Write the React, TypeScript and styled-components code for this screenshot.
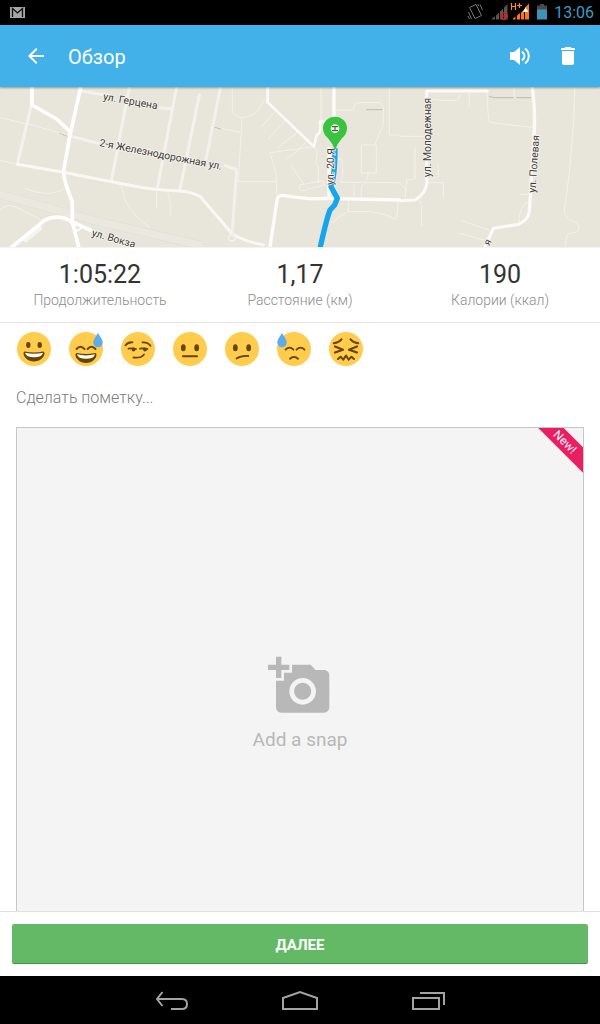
import React from 'react';
import styled, { createGlobalStyle } from 'styled-components';
import { MdAddAPhoto, MdArrowBack, MdDelete } from 'react-icons/md';

const GlobalStyle = createGlobalStyle`
  *, *::before, *::after { box-sizing: border-box; }
  body { margin: 0; background: #fff; font-family: Roboto, "Noto Sans", sans-serif; }
  button, input { font-family: inherit; }
`;

const Screen = styled.div`
  display: flex;
  flex-direction: column;
  height: 100vh;
  background: #fff;
  color: #333;
`;

const StatusBar = styled.div`
  flex: none;
  display: flex;
  align-items: center;
  gap: 6px;
  height: 25px;
  padding: 0 6px 0 10px;
  background: #000;
  color: #3a9cc8;
  font-size: 16px;
  line-height: 24px;
`;

const Spacer = styled.span`
  flex: 1;
`;

const AppBar = styled.header`
  position: relative;
  flex: none;
  display: flex;
  align-items: center;
  height: 62px;
  padding: 0 8px 0 12px;
  background: #42b1e9;
  color: #fff;
  box-shadow: 0 1px 2px rgba(0, 0, 0, 0.35);
`;

const Title = styled.h1`
  flex: 1;
  margin: 0;
  padding: 2px 0 0 8px;
  font-size: 20px;
  line-height: 24px;
  font-weight: 400;
`;

const IconButton = styled.button`
  display: flex;
  align-items: center;
  justify-content: center;
  width: 48px;
  height: 48px;
  padding: 0;
  border: 0;
  background: none;
  color: #fff;
`;

const MapView = styled.div`
  flex: none;
  height: 160px;
  background: #e8e5db;

  svg { display: block; width: 100%; height: 100%; }
  text { font-weight: 400; font-size: 31px; fill: #3f3c38; stroke: #f5f3ee; stroke-width: 5px; paint-order: stroke; }
`;

const Content = styled.main`
  flex: 1;
  min-height: 0;
  display: flex;
  flex-direction: column;
  overflow-y: auto;
  scrollbar-width: none;
`;

const Stats = styled.dl`
  flex: none;
  display: grid;
  grid-template-columns: repeat(3, 1fr);
  margin: 0;
  padding: 11px 0 13px;
  border-top: 1px solid #f4f3f0;
  border-bottom: 1px solid #e4e4e4;
`;

const Stat = styled.div`
  display: flex;
  flex-direction: column-reverse;
  text-align: center;
`;

const StatLabel = styled.dt`
  font-size: 14px;
  line-height: 18px;
  font-weight: 300;
  color: #8c8c8c;
`;

const StatValue = styled.dd`
  margin: 0;
  font-size: 25px;
  line-height: 32px;
  color: #333;
`;

const Moods = styled.div`
  flex: none;
  display: flex;
  gap: 16px;
  padding: 8px 16px;
`;

const MoodButton = styled.button`
  width: 36px;
  height: 36px;
  padding: 0;
  border: 0;
  background: none;

  svg { display: block; width: 36px; height: 36px; }
`;

const NoteInput = styled.input`
  flex: none;
  height: 44px;
  margin: 0 16px 8px;
  padding: 0;
  border: 0;
  outline: 0;
  background: none;
  font-size: 16px;
  font-weight: 300;
  color: #333;

  &::placeholder { color: #7c7c7c; opacity: 1; }
`;

const SnapButton = styled.button`
  position: relative;
  flex: none;
  display: flex;
  flex-direction: column;
  align-items: center;
  justify-content: center;
  gap: 10px;
  aspect-ratio: 1;
  margin: 0 16px 16px;
  padding: 0 0 16px;
  border: 1px solid #c6c6c6;
  background: #f4f4f4;
  color: #b8b8b8;
  font-size: 19px;
  line-height: 24px;
  overflow: hidden;
`;

const Ribbon = styled.span`
  position: absolute;
  top: 5px;
  right: -27px;
  width: 90px;
  background: #e91e63;
  color: #fff;
  font-size: 12px;
  line-height: 18px;
  text-align: center;
  transform: rotate(45deg);
`;

const Footer = styled.footer`
  flex: none;
  padding: 12px;
  border-top: 1px solid #e0e0e0;
  background: #fff;
`;

const NextButton = styled.button`
  display: block;
  width: 100%;
  height: 40px;
  padding: 2px 0 0;
  border: 0;
  border-bottom: 1px solid #4a9150;
  border-radius: 2px;
  background: #63b966;
  color: #fff;
  font-size: 15px;
  font-weight: 700;
`;

const SystemNav = styled.nav`
  flex: none;
  display: flex;
  justify-content: center;
  height: 48px;
  background: #000;
`;

const NavButton = styled.button`
  display: flex;
  align-items: center;
  justify-content: center;
  width: 128px;
  padding: 0;
  border: 0;
  background: none;
  color: #a3a3a3;
`;

const GmailIcon = () => (
  <svg width="15" height="11" viewBox="0 0 15 11" aria-hidden="true">
    <rect width="15" height="11" fill="#a5a5a5" />
    <path d="M2.5 10V1.5L7.5 6l5-4.5V10" fill="none" stroke="#111" strokeWidth="1.3" />
  </svg>
);

const StatusIcons = () => (
  <svg width="82" height="25" viewBox="466 0 82 25" aria-hidden="true">
    <g fill="none" stroke="#777" strokeWidth="1">
      <path d="M469.500 7.500l6.500-3 5.500 11-6.500 3z" />
      <path d="M468.500 12l3 7M480 4.500l2.500 5.500M468 16l1.500 3M477.500 4l1.500 2" />
    </g>
    <path d="M492 19.500v-1l3-2v3zM496 19.500v-4l3-3v7zM500 19.500v-8l3-3v11zM504 19.500V7.500l3.500-3.500v15.500z" fill="#555" />
    <circle cx="504" cy="16" r="3.200" fill="none" stroke="#c4272f" strokeWidth="1.500" />
    <path d="M501.500 16h5" stroke="#c4272f" strokeWidth="1.500" />
    <path d="M513 19.500v-1l2.500-2v3zM517 19.500v-4l3-2.500v6.500zM521 19.500v-7l3-2v9zM525 19.500V7.500l4-4v16z" fill="#ff7417" />
    <path d="M511.500 3v7M515.500 3v7M511.500 6.500h4M517 5.500h5M519.500 3v5" stroke="#ff8a2a" strokeWidth="1.200" />
    <path d="M522.500 12l3-4.500 3 4.500z" fill="#fff" />
    <path d="M540 4h4v1.500h3v5h-10v-5h3z" fill="#4a4a4a" />
    <path d="M537 9.500h10v10h-10z" fill="#3b93b5" />
  </svg>
);

const VolumeIcon = () => (
  <svg width="24" height="24" viewBox="0 0 24 24" aria-hidden="true">
    <path d="M2 8h4l6-5v18l-6-5H2z" fill="currentColor" />
    <path d="M14 7.500q5 4.500 0 9M17 4.600c5 3.600 5 11.200 0 14.800" fill="none" stroke="currentColor" strokeWidth="1.900" />
  </svg>
);

/* Street map; each group covers one third of the map's width. */
const StreetMap = () => (
  <svg viewBox="0 6 1800 480" preserveAspectRatio="xMidYMid slice" role="img" aria-label="Маршрут на карте">
    <g fill="none" stroke="#f4f2ec" strokeLinejoin="round" strokeLinecap="round">
      <path d="M0 328L280 406 600 480" stroke="#e2dfd5" strokeWidth="26" />
      <path d="M0 328L280 406 600 480" stroke="#ebe8e0" strokeWidth="22" />
      <g stroke="#f3f1eb" strokeWidth="3">
        <path d="M0 98L95 120 205 151M0 226l52 12M75 310c50 20 90 20 118 0M365 300c5 50 30 90 85 128M470 318v50M503 320q8 20 10 70M0 375q20-20 45-10l80 40" />
      </g>
      <g strokeWidth="9">
        <path d="M95 55L52 238M388 6L334 288M530 6L472 308M598 30L540 314M205 151l90 24M242 18l90 14M480 68l38 4" />
        <path d="M52 238L190 262 385 300Q455 315 540 318Q570 320 600 334L695 445Q720 465 790 480" stroke="#f9f8f5" />
      </g>
      <g stroke="#fff">
        <path d="M96 6V60L170 102 210 140" strokeWidth="11" />
        <path d="M242 6Q215 130 210 150L190 262Q195 300 217 350V410L236 486" strokeWidth="11" />
        <path d="M36 486L135 405Q175 385 220 412L290 444" strokeWidth="11" />
        <path d="M210 410l20 28 20-12" strokeWidth="5" />
        <path d="M76 464L118 430" strokeWidth="16" opacity="0.6" />
      </g>
    </g>
    <g transform="translate(600 0)" fill="none" stroke="#f3f1eb" strokeLinejoin="round" strokeLinecap="round">
      <path d="M97 6V80Q110 98 126 98Q155 95 170 80L195 42M126 98L115 290M45 126l75 16M227 78L184 126M262 102L205 162M294 140l-60 48M326 160q-30 40-66 60M342 185l-132 18 18 60 2 66M115 290h112M363 6V110M342 185l10 15-5 35 8 10v48M272 240l38 55M300 300l60-12q14-3 12 12l-66 18q-14-2-6-18M405 75h55q0-20 18-22h60q14 4 12 24v40L525 178M485 180h44v84h-44zM568 6V150h32M405 222h20q8 50-2 70h62q20-2 20-30M462 296v36M484 335v-30l10-12h106M388 410q20 5 22-10l34-20h70q20 4 40 8l30 14q10 0 10-60M445 345v35" strokeWidth="3" />
      <path d="M62 6L18 222M75 242l35 12L96 450" strokeWidth="9" />
      <path d="M203 6V52L342 185 350 150Q365 145 360 110H375" stroke="#fbfaf7" strokeWidth="8" />
      <path d="M402 6V130M210 486L232 340Q235 330 250 331Q330 345 375 340L600 345M387 190V340" stroke="#fdfcfa" strokeWidth="10" />
      <circle cx="96" cy="458" r="10" strokeWidth="4" />
      <path d="M500 74h46M45 127l18 5" stroke="#aaa79d" strokeWidth="2" />
      <path d="M405 190Q405 270 393 305L412 340 404 360 390 375Q380 400 360 490" stroke="#15a5ec" strokeWidth="16" strokeLinecap="butt" />
    </g>
    <g transform="translate(1200 0)" fill="none" stroke="#f3f1eb" strokeLinejoin="round" strokeLinecap="round">
      <path d="M95 42q35 8 75 4 10-5 10-20M208 24v40M262 20q0 80 8 92L400 128M342 6v32M0 154h75M45 190v90q0 5-25 5L15 340M0 296l20 20M115 240v36q0 5-30 7M85 293h45v42M55 342q10 5 10 20v60M360 328h24M385 350q-25 10-29 60M186 407l80 28M180 445l70 20M525 6q-5 190-32 370 0 18 12 26l24 10q15 16 0 30l-24 4q-8 10-8 40" strokeWidth="3" />
      <path d="M262 18H80V280Q85 320 45 345L0 347" stroke="#fbfaf8" strokeWidth="9" />
      <path d="M397 6Q407 80 402 150L388 380Q385 405 355 418L280 430 255 486" stroke="#fbfaf8" strokeWidth="10" />
      <path d="M268 35l16 3h56M350 38h42" stroke="#a8a69e" strokeWidth="2" />
    </g>
    <path d="M178 144l24 10" stroke="#999" strokeWidth="2" strokeDasharray="4 2" />
    <g>
      <text transform="translate(308 44) rotate(10)">ул. Герцена</text>
      <text transform="translate(297 183) rotate(11)">2-я Железнодорожная ул.</text>
      <text transform="translate(274 452) rotate(16)">ул. Вокза</text>
      <text transform="translate(1000 300) rotate(-88)">ул. 20 Я</text>
      <text transform="translate(1294 276) rotate(-90)">ул. Молодежная</text>
      <text transform="translate(1606 324) rotate(-86)">ул. Полевая</text>
      <text transform="translate(1468 484) rotate(-62)">я</text>
    </g>
    <path d="M1005 196Q998 175 984 160Q969 147 969 130A36 35 0 0 1 1041 130Q1041 147 1026 160Q1012 175 1005 196z" fill="#39c33f" />
    <circle cx="1005" cy="131" r="13" fill="#e9f3e0" />
    <path d="M996 125h18M996 137h18M1005 125v12" stroke="#444" strokeWidth="3" />
  </svg>
);

type MoodKind = 'great' | 'tired' | 'smirk' | 'neutral' | 'confused' | 'sad' | 'awful';

const Drop = ({ x }: { x: number }) => (
  <path transform={`translate(${x} 1.700)`} d="M0 0C-2 4-4.700 6.500-4.700 9.800A4.700 4.800 0 0 0 4.700 9.800C4.700 6.500 2 4 0 0z" fill="#5dadec" />
);

const Grin = ({ y }: { y: number }) => (
  <g transform={`translate(0 ${y})`}>
    <path d="M18 1.200Q13 1.200 9 .2Q7.500 0 7.500 2C7.500 6 12 10.200 18 10.200S28.500 6 28.500 2Q28.500 0 27 .2Q23 1.200 18 1.200z" fill="#664500" />
    <path d="M9 1.500Q13 2.600 18 2.600T27 1.500Q26 6 18 6T9 1.500z" fill="#fff" />
  </g>
);

const OvalEyes = ({ x = 11.3, y = 16.7 }: { x?: number; y?: number }) => (
  <g fill="#664500">
    <ellipse cx={x} cy={y} rx="2.400" ry="3.500" />
    <ellipse cx={36 - x} cy={y} rx="2.400" ry="3.500" />
  </g>
);

const faces: Record<MoodKind, React.ReactNode> = {
  great: (
    <>
      <g fill="#664500">
        <ellipse cx="12.300" cy="14" rx="2.200" ry="3" />
        <ellipse cx="23.700" cy="14" rx="2.200" ry="3" />
      </g>
      <Grin y={20.2} />
    </>
  ),
  tired: (
    <>
      <path d="M8.500 18q4-4.500 8 0M19.500 18q4-4.500 8 0" strokeWidth="1.900" />
      <Grin y={21.8} />
      <Drop x={30} />
    </>
  ),
  smirk: (
    <>
      <path d="M5.500 14.300Q8 11 12.500 11.300M22.500 11.300Q28 11 30.500 14.800" strokeWidth="1.800" />
      <path d="M8.500 17.700q4-.9 7.500.3M20 17.700q4-.9 7.500.3" strokeWidth="1.800" />
      <path d="M13.500 26.500Q21 27.500 24 23.500" strokeWidth="1.800" />
      <circle cx="13.500" cy="18.500" r="1.900" fill="#664500" stroke="none" />
      <circle cx="25" cy="18.500" r="1.900" fill="#664500" stroke="none" />
    </>
  ),
  neutral: (
    <>
      <OvalEyes />
      <path d="M11 25.300h14" strokeWidth="2" />
    </>
  ),
  confused: (
    <>
      <OvalEyes />
      <path d="M12.500 27.600Q17 24.500 24.300 25" strokeWidth="1.800" />
    </>
  ),
  sad: (
    <>
      <path d="M9.500 18.700q4-4.200 8 0M20.500 18.700q4-4.200 8 0" strokeWidth="1.800" />
      <path d="M14 27.700Q18 24.200 22 27.700" strokeWidth="2" />
      <Drop x={6} />
    </>
  ),
  awful: (
    <>
      <path d="M5.800 12.300Q11 11.500 13.500 8.300M30.200 12.300Q25 11.500 22.500 8.300" strokeWidth="2" />
      <path d="M7 15.500l8 3.200-8 2.800M29 15.500l-8 3.200 8 2.800" strokeWidth="2.200" />
      <path d="M10 28l2.600-2.300 2.700 3 2.700-4.200 2.700 4.200 2.700-3L26 28" strokeWidth="2" />
    </>
  ),
};

const moods: { kind: MoodKind; label: string }[] = [
  { kind: 'great', label: 'Отлично' },
  { kind: 'tired', label: 'Утомительно' },
  { kind: 'smirk', label: 'Легко' },
  { kind: 'neutral', label: 'Нормально' },
  { kind: 'confused', label: 'Так себе' },
  { kind: 'sad', label: 'Тяжело' },
  { kind: 'awful', label: 'Ужасно' },
];

const stats = [
  { label: 'Продолжительность', value: '1:05:22' },
  { label: 'Расстояние (км)', value: '1,17' },
  { label: 'Калории (ккал)', value: '190' },
];

export default function App() {
  return (
    <>
      <GlobalStyle />
      <Screen>
        <StatusBar>
          <GmailIcon />
          <Spacer />
          <StatusIcons />
          <time>13:06</time>
        </StatusBar>
        <AppBar>
          <IconButton aria-label="Назад"><MdArrowBack size={24} /></IconButton>
          <Title>Обзор</Title>
          <IconButton aria-label="Звук"><VolumeIcon /></IconButton>
          <IconButton aria-label="Удалить"><MdDelete size={24} /></IconButton>
        </AppBar>
        <Content>
          <MapView><StreetMap /></MapView>
          <Stats>
            {stats.map((s) => (
              <Stat key={s.label}>
                <StatLabel>{s.label}</StatLabel>
                <StatValue>{s.value}</StatValue>
              </Stat>
            ))}
          </Stats>
          <Moods>
            {moods.map((m) => (
              <MoodButton key={m.kind} aria-label={m.label}>
                <svg viewBox="0 0 36 36" fill="none" stroke="#664500" strokeLinecap="round" strokeLinejoin="round">
                  <circle cx="18" cy="18" r="17" fill="#ffcc4d" stroke="none" />
                  <g strokeWidth="0">{faces[m.kind]}</g>
                </svg>
              </MoodButton>
            ))}
          </Moods>
          <NoteInput type="text" aria-label="Пометка" placeholder="Сделать пометку..." />
          <SnapButton>
            <MdAddAPhoto size={64} />
            <span>Add a snap</span>
            <Ribbon>New!</Ribbon>
          </SnapButton>
        </Content>
        <Footer>
          <NextButton>ДАЛЕЕ</NextButton>
        </Footer>
        <SystemNav>
          <NavButton aria-label="Назад">
            <svg width="34" height="20" viewBox="0 0 34 20" fill="none" stroke="currentColor" strokeWidth="2">
              <path d="M7.500 2L2 9l5.500 7M2 9h25q5 0 5 5t-5 5H16" />
            </svg>
          </NavButton>
          <NavButton aria-label="Домой">
            <svg width="36" height="20" viewBox="0 0 36 20" fill="none" stroke="currentColor" strokeWidth="2">
              <path d="M1 19V8L18 2l17 6v11z" />
            </svg>
          </NavButton>
          <NavButton aria-label="Недавние приложения">
            <svg width="34" height="20" viewBox="0 0 34 20" fill="none" stroke="currentColor" strokeWidth="2">
              <path d="M2 8h26v11H2zM9 3h24v12" />
            </svg>
          </NavButton>
        </SystemNav>
      </Screen>
    </>
  );
}
